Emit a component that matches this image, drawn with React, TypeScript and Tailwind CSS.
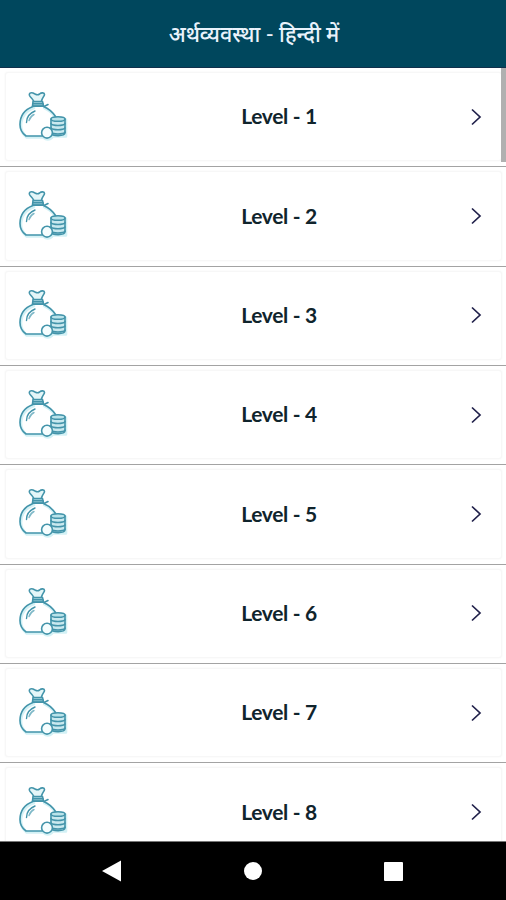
const levels = [1, 2, 3, 4, 5, 6, 7, 8];

// Money bag with a stack of coins and one coin in front
const MoneyBag = () => (
    <svg className="h-[54px] w-[54px] shrink-0" viewBox="0 0 54 54" fill="none" strokeLinecap="round" strokeLinejoin="round">
        <g stroke="#d3f1f5" strokeWidth="3" transform="translate(.8 .8)">
            <path d="M16 17C8 20 3 26 3 35c0 5 3 9 6 11.500h17M26.500 17c5 2 8 5 11 9" />
            <path d="M34 29v16.500h14V29z" fill="#d3f1f5" />
            <circle cx="30" cy="43" r="5.500" />
        </g>
        <g stroke="#4394aa" strokeWidth="1.600">
            <path d="M16.500 11c-.5-2-3-3.500-4-5.500-.8-2 1-3.300 3.500-2.500l2.500 1.200c1.500.8 2.700.8 4-.2 2-1.700 5-1.500 5 .5 0 1.500-2.500 3.500-3 6.500" fill="#e4f6f8" />
            <path d="M16 11.500h9.500l1 4.500h-11z" fill="#a5d5df" />
            <path d="M16 13.700h10M15.500 16.300h12l3.500-1.800" />
            <path d="M16 16.500C8 19.500 3 26 3 34.500c0 5 2.500 9 6 11.500h16M26.500 16.500c5 2 9 5.500 12 10" />
            <path d="M9.500 32.500c0-6 3.500-9.500 8.500-11.500" strokeWidth="1.400" />
            <path d="M12 30.500c1-3 2.500-4.800 5-6" stroke="#7fb9c8" strokeWidth="1.400" />
            <path d="M34 29v14c1 3.500 13.500 3.500 14 0V29" fill="#c9e9ef" />
            <ellipse cx="41" cy="29" rx="7" ry="2.300" fill="#b9e3ea" />
            <path d="M34 33.700c2 2.300 12 2.300 14 0M34 38c2 2.300 12 2.300 14 0M34 42.200c2 2.300 12 2.300 14 0" />
            <circle cx="30" cy="42.700" r="5.400" fill="#f5fdfe" />
        </g>
    </svg>
);

const LevelRow = ({ level }: { level: number }) => (
    <li className="h-[99.35px] shrink-0 border-b border-[#a3a3a3] pt-[4px] pr-[4px] pb-[5px] pl-[5px]">
        <div className="flex h-full items-center rounded-[3px] border border-[#f7f7f7] bg-white pr-[18px] pl-[11px] shadow-[0_0_2px_#f3f3f3]">
            <MoneyBag />
            <span className="flex-1 pb-px pl-[18px] text-center text-[21px] leading-6 font-bold tracking-[-0.35px] text-[#10242c]">
                Level - {level}
            </span>
            <svg className="h-[18px] w-[14px] shrink-0" viewBox="0 0 14 18" fill="none" stroke="#20204a" strokeWidth="1.700">
                <path d="M3 1.500 11 9l-8 7.500" />
            </svg>
        </div>
    </li>
);

const App = () => {
    return (
        <div className="flex h-[900px] w-[506px] flex-col overflow-hidden bg-white font-['Lato','Noto_Sans',sans-serif]">
            {/* header */}
            <header className="flex h-[68px] shrink-0 items-center justify-center border-b border-[#10304b] bg-[#00475d]">
                <h1 className="pl-[2px] text-[21.500px] leading-7 font-medium text-[#e9f2fb]">अर्थव्यवस्था - हिन्दी में</h1>
            </header>

            {/* level list */}
            <main className="relative h-[774px] shrink-0 overflow-hidden border-b border-[#777]">
                <ul className="flex flex-col">
                    {levels.map((level) => (
                        <LevelRow key={level} level={level} />
                    ))}
                </ul>
                <div className="absolute top-0 right-0 h-[94px] w-[5px] bg-[#b0b0b0]" />
            </main>

            {/* system navigation */}
            <nav className="flex flex-1 items-center bg-black pl-[102px]">
                <svg className="h-[22px] w-[20px]" viewBox="0 0 20 22" fill="#fff">
                    <path d="M0 11 19 .5v21z" />
                </svg>
                <span className="ml-[122px] h-[18px] w-[18px] rounded-full bg-white" />
                <span className="ml-[122px] h-[19px] w-[19px] rounded-[1px] bg-white" />
            </nav>
        </div>
    );
};

export default App;
